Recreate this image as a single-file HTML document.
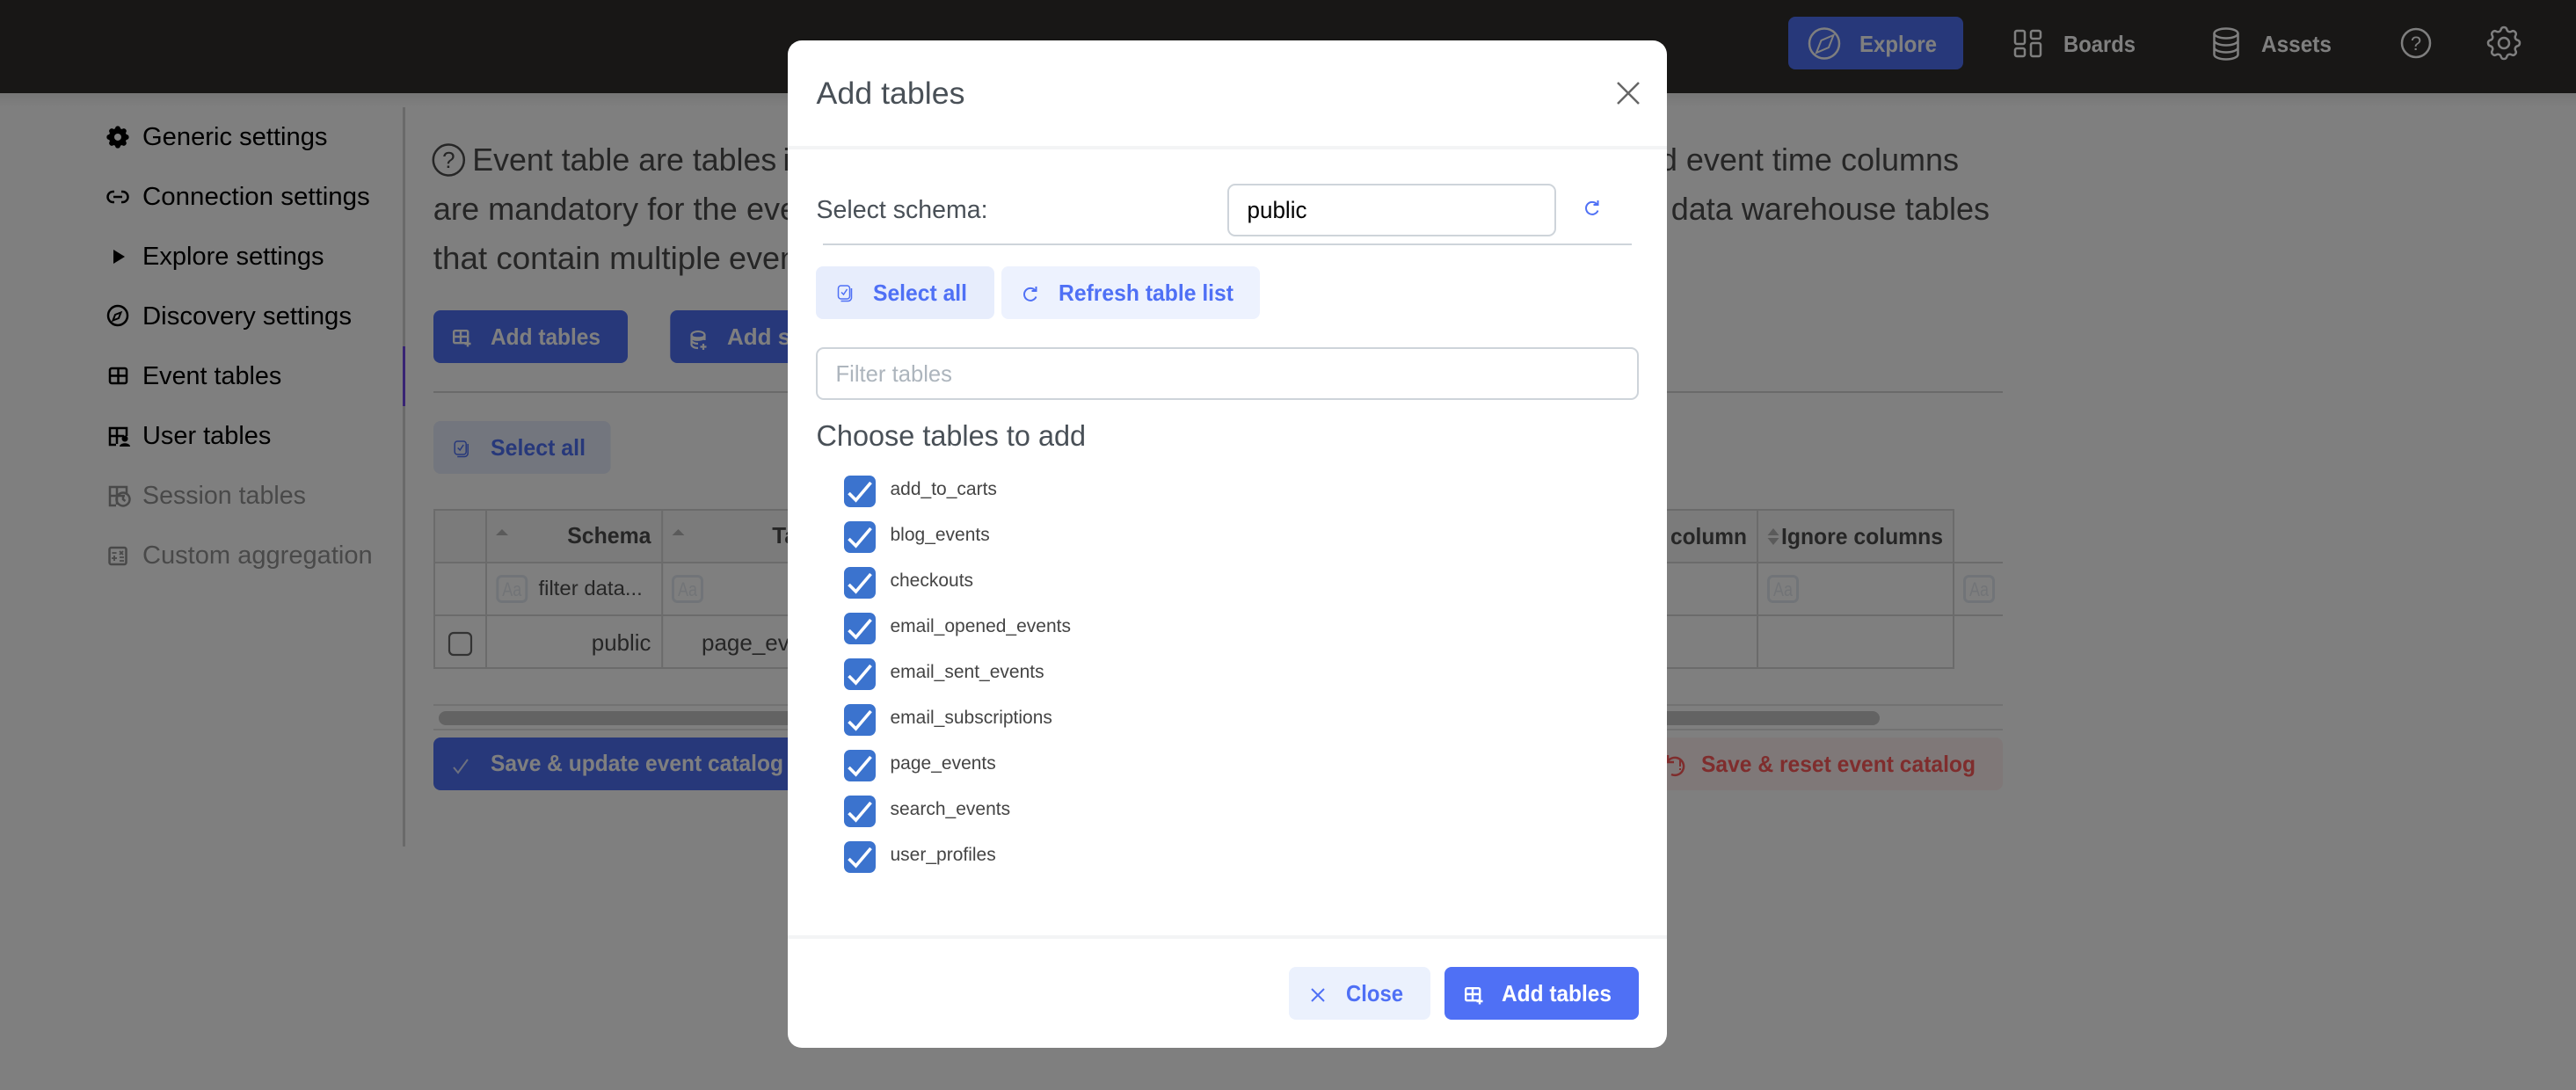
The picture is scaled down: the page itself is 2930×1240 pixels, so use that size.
<!DOCTYPE html>
<html lang="en"><head><meta charset="utf-8"><title>Add tables</title>
<style>html,body{margin:0;padding:0;background:#fff}svg{display:block}text{font-family:"Liberation Sans",Arial,sans-serif}</style></head>
<body>
<svg xmlns="http://www.w3.org/2000/svg" width="2930" height="1240" viewBox="0 0 2930 1240">
<defs>
<linearGradient id="sh" x1="0" y1="0" x2="0" y2="1"><stop offset="0" stop-color="#000" stop-opacity=".07"/><stop offset="1" stop-color="#000" stop-opacity="0"/></linearGradient>
<g id="tp" fill="none" stroke="currentColor" stroke-width="2.400"><rect x="1.200" y="1.200" width="16" height="14" rx="1.500"/><path d="M1 8h17M9 1v14"/><path d="M17 12.500v7M13.500 16h7"/></g>
<g id="rf" fill="none" stroke="currentColor" stroke-width="2"><path d="M5.500 -4.500A7 7 0 1 0 6.500 2.500"/><path d="M6.500 -9v5h-5"/></g>
<g id="sa" fill="none" stroke="currentColor" stroke-width="1.500"><rect x="-7.500" y="-9" width="13" height="15" rx="3"/><path d="M-4 -1.500l2.500 2.500l4 -6"/><path d="M7.500 -6v10a4 4 0 0 1 -4 4.500h-8"/></g>
<g id="aa"><rect x="1.500" y="1.500" width="33" height="29" rx="5" fill="none" stroke="#e2e8f0" stroke-width="3"/><text x="7" y="24" font-size="22" fill="#e4e9ef" textLength="22" lengthAdjust="spacingAndGlyphs">Aa</text></g>
</defs>

<!-- page -->
<rect width="2930" height="1240" fill="#fff"/>
<rect width="2930" height="106" fill="#302e2c"/>
<rect y="106" width="2930" height="16" fill="url(#sh)"/>

<!-- header nav -->
<rect x="2034" y="19" width="199" height="60" rx="8" fill="#4f70f5"/>
<g fill="none" stroke="#fff" stroke-width="2.500">
<circle cx="2075" cy="49.500" r="17"/><path d="M2066 60l5.500 -14l14 -6l-5.500 14z" stroke-width="2"/>
<rect x="2292" y="35" width="11" height="15" rx="2"/><rect x="2292" y="55" width="11" height="9" rx="2"/><rect x="2310" y="35" width="11" height="9" rx="2"/><rect x="2310" y="49" width="11" height="15" rx="2"/>
<ellipse cx="2532" cy="38" rx="13.500" ry="5.500"/><path d="M2518.500 38v24c0 3 6 5.500 13.500 5.500s13.500 -2.500 13.500 -5.500v-24M2518.500 46c0 3 6 5.500 13.500 5.500s13.500 -2.500 13.500 -5.500M2518.500 54c0 3 6 5.500 13.500 5.500s13.500 -2.500 13.500 -5.500"/>
<circle cx="2748" cy="49" r="16"/>
<g transform="translate(2824 25) scale(2)" stroke-width="1.250"><path d="M10.325 4.317c.426 -1.756 2.924 -1.756 3.35 0a1.724 1.724 0 0 0 2.573 1.066c1.543 -.94 3.31 .826 2.37 2.37a1.724 1.724 0 0 0 1.065 2.572c1.756 .426 1.756 2.924 0 3.35a1.724 1.724 0 0 0 -1.066 2.573c.94 1.543 -.826 3.31 -2.37 2.37a1.724 1.724 0 0 0 -2.572 1.065c-.426 1.756 -2.924 1.756 -3.35 0a1.724 1.724 0 0 0 -2.573 -1.066c-1.543 .94 -3.31 -.826 -2.37 -2.37a1.724 1.724 0 0 0 -1.065 -2.572c-1.756 -.426 -1.756 -2.924 0 -3.35a1.724 1.724 0 0 0 1.066 -2.573c-.94 -1.543 .826 -3.31 2.37 -2.37c1 .608 2.296 .07 2.572 -1.065z"/><circle cx="12" cy="12" r="3"/></g>
</g>
<g fill="#fff" font-weight="700" font-size="26">
<text x="2115" y="59" textLength="88" lengthAdjust="spacingAndGlyphs">Explore</text>
<text x="2347" y="59" textLength="82" lengthAdjust="spacingAndGlyphs">Boards</text>
<text x="2572" y="59" textLength="80" lengthAdjust="spacingAndGlyphs">Assets</text>
<text x="2748" y="57" font-size="22" font-weight="400" text-anchor="middle">?</text>
</g>

<!-- sidebar -->
<rect x="458" y="122" width="3" height="841" fill="#d3d3d3"/>
<rect x="458" y="394" width="3" height="68" fill="#7048e8"/>
<g font-size="29" fill="#000">
<text x="162" y="165" textLength="210.500" lengthAdjust="spacingAndGlyphs">Generic settings</text>
<text x="162" y="233" textLength="258.800" lengthAdjust="spacingAndGlyphs">Connection settings</text>
<text x="162" y="301" textLength="206.500" lengthAdjust="spacingAndGlyphs">Explore settings</text>
<text x="162" y="369" textLength="238" lengthAdjust="spacingAndGlyphs">Discovery settings</text>
<text x="162" y="437" textLength="158.300" lengthAdjust="spacingAndGlyphs">Event tables</text>
<text x="162" y="505" textLength="146.300" lengthAdjust="spacingAndGlyphs">User tables</text>
<text x="162" y="573" textLength="185.900" lengthAdjust="spacingAndGlyphs" fill="#939393">Session tables</text>
<text x="162" y="641" textLength="261.700" lengthAdjust="spacingAndGlyphs" fill="#939393">Custom aggregation</text>
</g>
<!-- sidebar icons -->
<g transform="translate(118 140) scale(1.330)" fill="#000" stroke="#000" stroke-width="1"><path d="M10.325 4.317c.426 -1.756 2.924 -1.756 3.35 0a1.724 1.724 0 0 0 2.573 1.066c1.543 -.94 3.31 .826 2.37 2.37a1.724 1.724 0 0 0 1.065 2.572c1.756 .426 1.756 2.924 0 3.35a1.724 1.724 0 0 0 -1.066 2.573c.94 1.543 -.826 3.31 -2.37 2.37a1.724 1.724 0 0 0 -2.572 1.065c-.426 1.756 -2.924 1.756 -3.35 0a1.724 1.724 0 0 0 -2.573 -1.066c-1.543 .94 -3.31 -.826 -2.37 -2.37a1.724 1.724 0 0 0 -1.065 -2.572c-1.756 -.426 -1.756 -2.924 0 -3.35a1.724 1.724 0 0 0 1.066 -2.573c-.94 -1.543 .826 -3.31 2.37 -2.37c1 .608 2.296 .07 2.572 -1.065z"/><circle cx="12" cy="12" r="3" fill="#fff" stroke="none"/></g>
<g fill="none" stroke="#000" stroke-width="2.500">
<path d="M130 218h-1.500a6 6 0 0 0 0 12h1.500M138 218h1.500a6 6 0 0 1 0 12h-1.500M129 224h10"/>
<circle cx="134" cy="359" r="11"/><path d="M128.500 364.500l2.500 -6.500l6.500 -2.500l-2.500 6.500z" stroke-width="2"/>
<rect x="125" y="419" width="19" height="17" rx="2"/><path d="M124 427.500h21M134.500 419v17"/>
<path d="M132 506h-7v-19h19v9M124 496h17M133 487v18"/>
</g>
<path d="M129 284l13 8l-13 8z" fill="#000"/>
<g fill="#000"><circle cx="142" cy="499" r="3.500"/><path d="M136 508c0 -5 12 -5 12 0z"/></g>
<g fill="none" stroke="#929292" stroke-width="2.500">
<path d="M132 575h-7v-21h19v9M124 564h18M133 554v20"/><circle cx="140" cy="568" r="7.500"/><path d="M140 564v4l2.500 2"/>
<rect x="124.500" y="623" width="19" height="19" rx="2"/><path d="M127.500 629h5M136 627l4 4M140 627l-4 4M127 635h6M130 632v6M136 634h5M136 638h5" stroke-width="1.800"/>
</g>

<!-- description -->
<g font-size="36" fill="#4c4c4c">
<circle cx="510.300" cy="182" r="17.500" fill="none" stroke="#4c4c4c" stroke-width="2.500"/>
<text x="510.300" y="191" font-size="26" text-anchor="middle">?</text>
<text x="537.300" y="194" textLength="346" lengthAdjust="spacingAndGlyphs">Event table are tables</text>
<text x="890.500" y="194">in your data warehouse</text>
<text x="492.800" y="250" textLength="346" lengthAdjust="spacingAndGlyphs">are mandatory for the</text>
<text x="849" y="250">event table</text>
<text x="492.800" y="306" textLength="327" lengthAdjust="spacingAndGlyphs">that contain multiple</text>
<text x="829" y="306">event types</text>
<text x="2228" y="194" text-anchor="end">d event time columns</text>
<text x="2263" y="250" text-anchor="end">data warehouse tables</text>
</g>

<!-- action buttons -->
<rect x="493" y="353" width="221" height="60" rx="8" fill="#4f70f5"/>
<use href="#tp" x="515" y="375" color="#fff"/>
<rect x="762.300" y="353" width="300" height="60" rx="8" fill="#4f70f5"/>
<g fill="none" stroke="#fff" stroke-width="2.200"><ellipse cx="794" cy="381" rx="7.500" ry="4"/><path d="M786.500 381v11c0 2 3 4 7.500 4M801.500 381v6M786.500 387c0 2 3 4 7.500 4"/><path d="M800 391v7M796.500 394.500h7"/></g>
<path d="M786.500 381c0 3 15 3 15 0v5c-3 2 -12 3 -15 0z" fill="#fff"/>
<g font-weight="700" font-size="26" fill="#fff">
<text x="558" y="392" textLength="125" lengthAdjust="spacingAndGlyphs">Add tables</text>
<text x="827" y="392">Add source tables</text>
</g>
<rect x="493" y="445" width="1785" height="2" fill="#d4d4d4"/>
<rect x="493" y="479" width="201.600" height="60" rx="8" fill="#e7edfc"/>
<use href="#sa" x="524.700" y="511" color="#4f70f5"/>
<text x="558" y="518" font-weight="700" font-size="26" fill="#4f70f5" textLength="108" lengthAdjust="spacingAndGlyphs">Select all</text>

<!-- table -->
<rect x="494" y="580" width="1728" height="60" fill="#f7f7f7"/>
<g fill="none" stroke="#d6d6d6" stroke-width="2">
<path d="M494 580H2222V760H494zM494 640H2278M494 700H2278M553 580V760M753.200 580V760M1999 580V760"/>
</g>
<g fill="#b5b5b5">
<path d="M571 602l7 7h-14zM771.500 602l7 7h-14z"/>
<path d="M2017 601l6.500 8h-13zM2017 620l6.500 -8h-13z"/>
</g>
<g font-weight="700" font-size="26" fill="#4c4c4c">
<text x="645.200" y="618" textLength="95.300" lengthAdjust="spacingAndGlyphs">Schema</text>
<text x="878.300" y="618">Table name</text>
<text x="1900" y="619" textLength="87" lengthAdjust="spacingAndGlyphs">column</text>
<text x="2026" y="619" textLength="184" lengthAdjust="spacingAndGlyphs">Ignore columns</text>
</g>
<use href="#aa" x="564.300" y="654"/><use href="#aa" x="764" y="654"/><use href="#aa" x="2010" y="654"/><use href="#aa" x="2233" y="654"/>
<text x="612.500" y="677" font-size="23" fill="#4c4c4c" textLength="118.300" lengthAdjust="spacingAndGlyphs">filter data...</text>
<rect x="511" y="720" width="25" height="25" rx="5" fill="#fff" stroke="#666" stroke-width="2.200"/>
<text x="672.800" y="740" font-size="26" fill="#4c4c4c" textLength="67.700" lengthAdjust="spacingAndGlyphs">public</text>
<text x="798" y="740" font-size="26" fill="#4c4c4c">page_events</text>

<!-- scrollbar -->
<rect x="493" y="801" width="1785" height="2" fill="#e5e5e5"/>
<rect x="493" y="829" width="1785" height="2" fill="#e5e5e5"/>
<rect x="499" y="809" width="1639" height="16" rx="8" fill="#c6c6c6"/>

<!-- bottom buttons -->
<rect x="493" y="839" width="500" height="60" rx="8" fill="#4f70f5"/>
<path d="M516 873l5 6l11 -15" fill="none" stroke="#dbe3ff" stroke-width="2"/>
<text x="558" y="877" font-weight="700" font-size="26" fill="#fff" textLength="333" lengthAdjust="spacingAndGlyphs">Save &amp; update event catalog</text>
<rect x="1800" y="839" width="478" height="60" rx="8" fill="#fff0f0"/>
<path d="M1896 868a10 10 0 1 1 4 15M1896 861v8h7" fill="none" stroke="#ff5a5a" stroke-width="2.500" transform="translate(1 -2)"/>
<text x="1935" y="878" font-weight="700" font-size="26" fill="#ff5a5a" textLength="312" lengthAdjust="spacingAndGlyphs">Save &amp; reset event catalog</text>
<path d="M1911 864v8M1911 874v2" stroke="#ff5a5a" stroke-width="2"/>

<!-- overlay -->
<rect width="2930" height="1240" fill="#000" opacity=".5"/>

<!-- modal -->
<rect x="896" y="46" width="1000" height="1146" rx="16" fill="#fff"/>
<text x="928.500" y="118" font-size="35" fill="#495057" textLength="169" lengthAdjust="spacingAndGlyphs">Add tables</text>
<path d="M1840 94l24 24M1864 94l-24 24" stroke="#666" stroke-width="2.500" fill="none"/>
<rect x="896" y="166" width="1000" height="4" fill="#f3f4f5"/>

<text x="928.500" y="248" font-size="29" fill="#495057" textLength="195" lengthAdjust="spacingAndGlyphs">Select schema:</text>
<rect x="1397" y="210" width="372" height="58" rx="8" fill="#fff" stroke="#ced4da" stroke-width="2"/>
<text x="1418.500" y="248" font-size="27" fill="#000" textLength="68" lengthAdjust="spacingAndGlyphs">public</text>
<use href="#rf" x="1811" y="237" color="#4f70f5"/>
<rect x="936" y="277" width="920" height="2" fill="#ced4da"/>

<rect x="928" y="303" width="203" height="60" rx="8" fill="#e7edfc"/>
<use href="#sa" x="961" y="334" color="#4f70f5"/>
<text x="993" y="342" font-weight="700" font-size="26" fill="#4f70f5" textLength="107" lengthAdjust="spacingAndGlyphs">Select all</text>
<rect x="1139" y="303" width="294" height="60" rx="8" fill="#edf2fe"/>
<use href="#rf" x="1172" y="335" color="#4f70f5"/>
<text x="1204" y="342" font-weight="700" font-size="26" fill="#4f70f5" textLength="199" lengthAdjust="spacingAndGlyphs">Refresh table list</text>

<rect x="929" y="396" width="934" height="58" rx="8" fill="#fff" stroke="#ced4da" stroke-width="2"/>
<text x="950.500" y="434" font-size="26" fill="#adb5bd" textLength="132.500" lengthAdjust="spacingAndGlyphs">Filter tables</text>

<text x="928.500" y="507" font-size="33" fill="#495057" textLength="306.600" lengthAdjust="spacingAndGlyphs">Choose tables to add</text>

<g>
<g transform="translate(960 541)"><rect width="36" height="36" rx="7" fill="#3b73ce"/><path d="M5.500 20l8 8l17 -20" fill="none" stroke="#fff" stroke-width="3.600"/></g>
<g transform="translate(960 593)"><rect width="36" height="36" rx="7" fill="#3b73ce"/><path d="M5.500 20l8 8l17 -20" fill="none" stroke="#fff" stroke-width="3.600"/></g>
<g transform="translate(960 645)"><rect width="36" height="36" rx="7" fill="#3b73ce"/><path d="M5.500 20l8 8l17 -20" fill="none" stroke="#fff" stroke-width="3.600"/></g>
<g transform="translate(960 697)"><rect width="36" height="36" rx="7" fill="#3b73ce"/><path d="M5.500 20l8 8l17 -20" fill="none" stroke="#fff" stroke-width="3.600"/></g>
<g transform="translate(960 749)"><rect width="36" height="36" rx="7" fill="#3b73ce"/><path d="M5.500 20l8 8l17 -20" fill="none" stroke="#fff" stroke-width="3.600"/></g>
<g transform="translate(960 801)"><rect width="36" height="36" rx="7" fill="#3b73ce"/><path d="M5.500 20l8 8l17 -20" fill="none" stroke="#fff" stroke-width="3.600"/></g>
<g transform="translate(960 853)"><rect width="36" height="36" rx="7" fill="#3b73ce"/><path d="M5.500 20l8 8l17 -20" fill="none" stroke="#fff" stroke-width="3.600"/></g>
<g transform="translate(960 905)"><rect width="36" height="36" rx="7" fill="#3b73ce"/><path d="M5.500 20l8 8l17 -20" fill="none" stroke="#fff" stroke-width="3.600"/></g>
<g transform="translate(960 957)"><rect width="36" height="36" rx="7" fill="#3b73ce"/><path d="M5.500 20l8 8l17 -20" fill="none" stroke="#fff" stroke-width="3.600"/></g>
</g>
<g font-size="21" fill="#444">
<text x="1012.500" y="563">add_to_carts</text>
<text x="1012.500" y="615">blog_events</text>
<text x="1012.500" y="667">checkouts</text>
<text x="1012.500" y="719">email_opened_events</text>
<text x="1012.500" y="771">email_sent_events</text>
<text x="1012.500" y="823">email_subscriptions</text>
<text x="1012.500" y="875">page_events</text>
<text x="1012.500" y="927">search_events</text>
<text x="1012.500" y="979">user_profiles</text>
</g>

<rect x="896" y="1064" width="1000" height="4" fill="#f3f4f5"/>
<rect x="1466" y="1100" width="161" height="60" rx="8" fill="#ebf1fd"/>
<path d="M1492 1125l14 14M1506 1125l-14 14" stroke="#4f70f5" stroke-width="2" fill="none"/>
<text x="1531" y="1139" font-weight="700" font-size="26" fill="#4f70f5" textLength="65" lengthAdjust="spacingAndGlyphs">Close</text>
<rect x="1643" y="1100" width="221" height="60" rx="8" fill="#4f70f5"/>
<use href="#tp" x="1666" y="1123" color="#fff"/>
<text x="1708" y="1139" font-weight="700" font-size="26" fill="#fff" textLength="125" lengthAdjust="spacingAndGlyphs">Add tables</text>
</svg>
</body></html>
